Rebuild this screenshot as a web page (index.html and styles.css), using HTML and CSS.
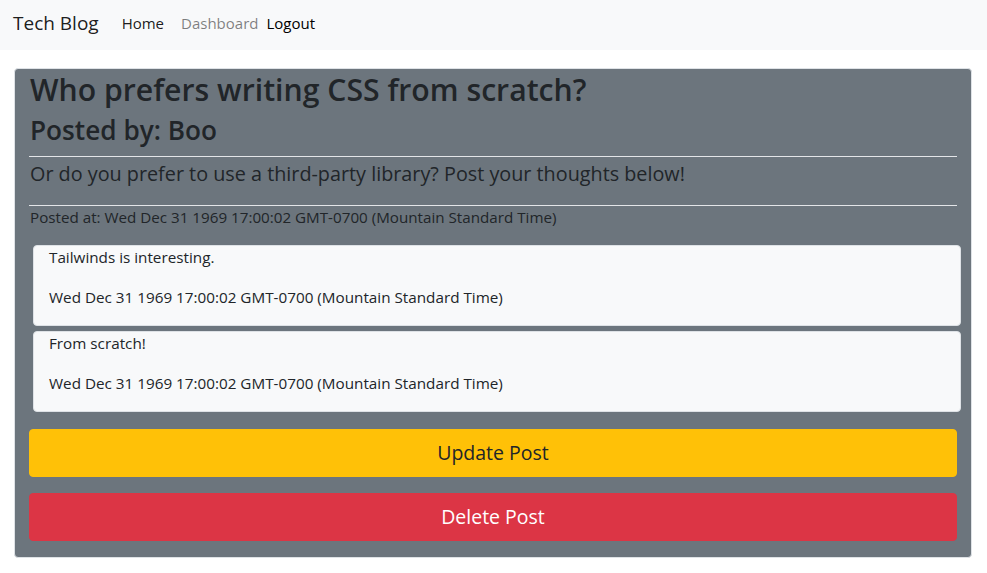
FILE: index.html
```html
<!DOCTYPE html>
<html lang="en">
<head>
<meta charset="utf-8">
<title>Tech Blog</title>
<link rel="stylesheet" href="styles.css">
</head>
<body>
<nav class="navbar">
  <a class="brand" href="#">Tech Blog</a>
  <div class="nav-links">
    <a class="nav-link home" href="#">Home</a>
    <a class="nav-link muted" href="#">Dashboard</a>
    <a class="nav-link dark" href="#">Logout</a>
  </div>
</nav>
<main class="page">
  <section class="post-card">
    <h2 class="post-title">Who prefers writing CSS from scratch?</h2>
    <h3 class="post-author">Posted by: Boo</h3>
    <hr class="rule">
    <p class="post-body">Or do you prefer to use a third-party library? Post your thoughts below!</p>
    <hr class="rule">
    <p class="post-date">Posted at: Wed Dec 31 1969 17:00:02 GMT-0700 (Mountain Standard Time)</p>
    <div class="comments">
      <div class="comment">
        <p class="comment-text">Tailwinds is interesting.</p>
        <p class="comment-date">Wed Dec 31 1969 17:00:02 GMT-0700 (Mountain Standard Time)</p>
      </div>
      <div class="comment">
        <p class="comment-text">From scratch!</p>
        <p class="comment-date">Wed Dec 31 1969 17:00:02 GMT-0700 (Mountain Standard Time)</p>
      </div>
    </div>
    <button class="btn btn-warning">Update Post</button>
    <button class="btn btn-danger">Delete Post</button>
  </section>
</main>
</body>
</html>
```
FILE: styles.css
```css
* { box-sizing: border-box; }
html, body { margin: 0; padding: 0; }
body {
  font-family: "Open Sans", "Noto Sans", sans-serif;
  color: #212529;
  background: #fff;
  font-size: 15px;
}
a { text-decoration: none; }

.navbar {
  display: flex;
  align-items: center;
  height: 50px;
  padding: 0 13px 4px 13px;
  background: #f8f9fa;
}
.brand {
  font-size: 19px;
  color: rgba(0,0,0,.9);
  margin-right: 23px;
}
.nav-links { display: flex; align-items: center; }
.nav-link { font-size: 15px; }
.home { color: rgba(0,0,0,.9); margin-right: 17px; }
.muted { color: rgba(0,0,0,.5); margin-right: 8px; }
.dark { color: #000; }

.page { padding: 18px 15px 0 14px; }

.post-card {
  background: #6c757d;
  border: 1px solid #dee2e6;
  border-radius: 4px;
  padding: 2px 14px 16px 14px;
  display: flex;
  flex-direction: column;
}
.post-title {
  margin: 0 0 0 1px;
  font-size: 30.2px;
  font-weight: 600;
  line-height: 38px;
}
.post-author {
  margin: 4px 0 0 1px;
  font-size: 26.2px;
  font-weight: 600;
  line-height: 34px;
}
.rule {
  border: 0;
  border-top: 1px solid #e3e5e8;
  margin: 9px 0 0 0;
  height: 0;
}
.post-body {
  margin: 3px 0 0 1px;
  font-size: 19.8px;
  line-height: 28px;
}
.post-body + .rule { margin-top: 17px; }
.post-date {
  margin: 1px 0 0 1px;
  font-size: 15.2px;
  line-height: 20px;
}
.comments {
  margin: 18px -4px 0 4px;
  display: flex;
  flex-direction: column;
  gap: 5px;
}
.comment {
  background: #f8f9fa;
  border: 1px solid #dee2e6;
  border-radius: 4px;
  height: 81px;
  padding: 0 15px 0 15px;
  font-size: 15.25px;
  line-height: 22px;
}
.comment-text { margin: 0; }
.comment-date { margin: 18px 0 0 0; }

.btn {
  display: block;
  width: 100%;
  height: 48px;
  border: 1px solid transparent;
  border-radius: 4px;
  font-family: inherit;
  font-size: 19.5px;
  line-height: 30px;
  cursor: pointer;
}
.btn-warning {
  margin-top: 17px;
  background: #ffc107;
  border-color: #ffc107;
  color: #212529;
}
.btn-danger {
  margin-top: 16px;
  background: #dc3545;
  border-color: #dc3545;
  color: #fff;
}
```
